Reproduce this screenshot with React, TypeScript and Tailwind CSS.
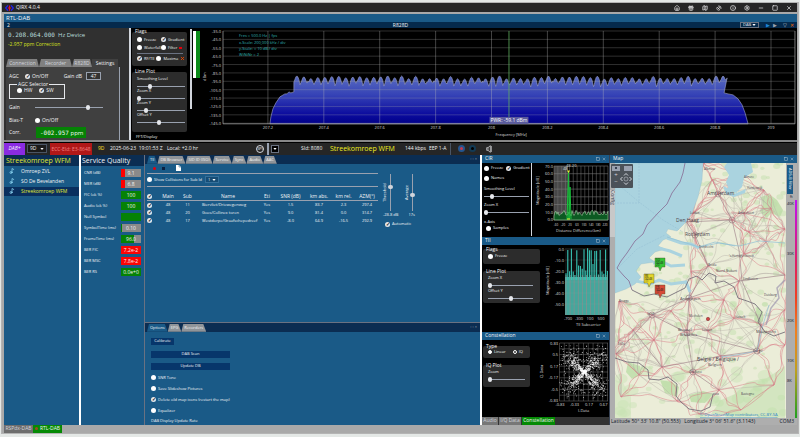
import { useState } from 'react';
import type { ReactNode } from 'react';
import {
  Gift,
  House,
  Info,
  Map,
  Minus,
  Music2,
  SatelliteDish,
  Settings,
  Square,
  X,
} from 'lucide-react';

// small seeded generator, keeps the plots stable between renders
function createRandom(seed: number) {
  let s = seed;
  return () => {
    s = (s * 16807) % 2147483647;
    return s / 2147483647;
  };
}

const checkClass =
  "block h-[5px] w-[5px] shrink-0 appearance-none rounded-full bg-white checked:bg-gray-200 checked:before:block checked:before:text-center checked:before:text-[5px] checked:before:leading-[5px] checked:before:font-bold checked:before:text-black checked:before:content-['✓']";

const sliderClass =
  'block h-[5px] w-full appearance-none bg-transparent [&::-webkit-slider-runnable-track]:h-px [&::-webkit-slider-runnable-track]:bg-gray-400 [&::-webkit-slider-thumb]:-mt-[2px] [&::-webkit-slider-thumb]:h-[5px] [&::-webkit-slider-thumb]:w-[4px] [&::-webkit-slider-thumb]:appearance-none [&::-webkit-slider-thumb]:rounded-full [&::-webkit-slider-thumb]:bg-gray-200';

const verticalClass =
  'block h-[37px] w-[5px] appearance-none bg-transparent [writing-mode:vertical-lr] [&::-webkit-slider-runnable-track]:w-px [&::-webkit-slider-runnable-track]:bg-gray-400 [&::-webkit-slider-thumb]:-ml-[2px] [&::-webkit-slider-thumb]:h-[4px] [&::-webkit-slider-thumb]:w-[5px] [&::-webkit-slider-thumb]:appearance-none [&::-webkit-slider-thumb]:rounded-full [&::-webkit-slider-thumb]:bg-gray-300';

function Check({ label, on = false }: { label: string; on?: boolean }) {
  const [checked, setChecked] = useState(on);
  return (
    <label className="flex items-center gap-[2px] whitespace-nowrap">
      <input type="checkbox" className={checkClass} checked={checked} onChange={(e) => setChecked(e.target.checked)} />
      {label}
    </label>
  );
}

function Slider({ label, value }: { label: string; value: number }) {
  return (
    <label className="block">
      <span className="block h-[7px] whitespace-nowrap">{label}</span>
      <input type="range" defaultValue={value} className={sliderClass} />
    </label>
  );
}

function Select({ label, value, className }: { label: string; value: string; className: string }) {
  return (
    <span className={`flex items-center border px-[2px] ${className}`}>
      <select aria-label={label} className="min-w-0 flex-1 appearance-none bg-transparent leading-none">
        <option>{value}</option>
      </select>
      <svg viewBox="0 0 8 5" className="h-[2px] w-[4px] shrink-0">
        <path d="M0 0h8L4 5z" fill="#fff" />
      </svg>
    </span>
  );
}

function Group({ title, children }: { title: string; children: ReactNode }) {
  return (
    <fieldset className="min-w-0 rounded-[2px] bg-[#2c2c2c] pb-[4px] pl-[5px] pr-[2px]">
      <legend className="-ml-[2px] h-[5px] text-[5px] leading-[5px]">{title}</legend>
      {children}
    </fieldset>
  );
}

function PanelHeader({ title }: { title: string }) {
  return (
    <div className="flex h-[8px] items-center bg-[#1a5a87] px-[3px] text-[5px]">
      <h2>{title}</h2>
      <button aria-label={`Float ${title}`} className="ml-auto">
        <Square className="h-[4px] w-[4px]" />
      </button>
      <button aria-label={`Close ${title}`} className="ml-[2px]">
        <X className="h-[4px] w-[4px]" />
      </button>
    </div>
  );
}

function TabStrip({ tabs, active }: { tabs: string[]; active: string }) {
  return (
    <div className="flex h-[9px] items-end bg-[#0b2d52] pl-[2px] text-[4px]">
      {tabs.map((tab) => (
        <button
          key={tab}
          className={
            tab === active
              ? 'h-[8px] whitespace-nowrap bg-[#1a5a87] pl-[3px] pr-[3px] [clip-path:polygon(2px_0,calc(100%-3px)_0,100%_100%,0_100%)]'
              : 'h-[8px] whitespace-nowrap bg-[#8f9499] pl-[3px] pr-[3px] text-gray-100 [clip-path:polygon(2px_0,calc(100%-3px)_0,100%_100%,0_100%)]'
          }
        >
          {tab}
        </button>
      ))}
      <span className="ml-auto self-center pr-[3px] text-gray-400">‹ › ×</span>
    </div>
  );
}

function TitleBar() {
  const icons = [House, Gift, Map, SatelliteDish, Info, Settings, Minus, Square, X];
  const names = ['Home', 'Packages', 'Map', 'Antenna', 'Info', 'Settings', 'Minimize', 'Maximize', 'Close'];
  return (
    <header className="flex h-[9px] items-center bg-[#262626] px-[3px]">
      <svg viewBox="0 0 24 16" className="h-[6px] w-[9px]">
        <path d="M8 1L2 8l6 7M16 1l6 7-6 7" fill="none" stroke="#2222e0" strokeWidth="4" />
        <path d="M12 1v14M8 8h8" stroke="#e01030" strokeWidth="3" />
      </svg>
      <h1 className="ml-[2px] text-[5px]">QIRX 4.0.4</h1>
      <div className="ml-auto flex items-center gap-[8px] pr-[2px]">
        {icons.map((Icon, i) => (
          <button key={names[i]} aria-label={names[i]}>
            <Icon className="h-[6px] w-[6px]" strokeWidth={2.5} />
          </button>
        ))}
      </div>
    </header>
  );
}

function DevicePanel() {
  const tabs = ['Connection', 'Recorder', 'R828D', 'Settings'];
  return (
    <section className="flex w-[125px] shrink-0 flex-col bg-[#303030]">
      <p className="mt-[3px] flex items-center pl-[4px] text-[6px] leading-[8px] text-[#b9dcdc]">
        <span className="font-['DejaVu_Sans_Mono',monospace]">0.208.064.000</span>
        <span className="ml-[3px]">Hz Device</span>
      </p>
      <p className="mt-[1px] pl-[4px] text-[5px] leading-[8px] text-[#d8e020]">-2.957 ppm Correction</p>
      <div className="mt-[11px] flex h-[8px] pl-[2px] text-[5px]">
        {tabs.map((tab) => (
          <button
            key={tab}
            className={
              tab === 'Settings'
                ? 'w-[26px] bg-[#404040]'
                : tab === 'R828D'
                  ? 'w-[20px] bg-[#808080] text-gray-300 [clip-path:polygon(2px_0,calc(100%-2px)_0,100%_100%,0_100%)]'
                  : 'w-[33px] bg-[#808080] text-gray-300 [clip-path:polygon(2px_0,calc(100%-2px)_0,100%_100%,0_100%)]'
            }
          >
            {tab}
          </button>
        ))}
      </div>
      <div className="mx-[2px] mr-[9px] flex flex-1 flex-col border-r border-gray-400 bg-[#404040] pl-[3px] text-[5px]">
        <div className="mt-[5px] flex h-[8px] items-center">
          <span className="w-[16px]">AGC</span>
          <Check label="On/Off" on />
          <label className="ml-auto mr-[18px] flex items-center gap-[4px]">
            Gain dB
            <input defaultValue="47" className="h-[8px] w-[15px] border border-gray-400 bg-[#333] text-center" />
          </label>
        </div>
        <fieldset className="ml-0 mt-[1px] flex h-[18px] w-[56px] min-w-0 gap-[7px] border border-gray-200 pl-[7px]">
          <legend className="px-[1px] text-[5px] leading-[7px]">AGC Selector</legend>
          <Check label="HW" />
          <Check label="SW" on />
        </fieldset>
        <label className="mt-[5px] flex h-[7px] items-center">
          <span className="w-[26px]">Gain</span>
          <span className="w-[68px]">
            <input type="range" defaultValue={80} className={sliderClass} />
          </span>
        </label>
        <div className="mt-[5px] flex h-[8px] items-center">
          <span className="w-[26px]">Bias-T</span>
          <Check label="On/Off" />
        </div>
        <div className="mt-[3px] flex items-center">
          <span className="w-[27px]">Corr.</span>
          <output className="h-[11px] w-[50px] bg-[#058205] pl-[4px] text-[6px] leading-[11px]">
            <span className="font-['DejaVu_Sans_Mono',monospace]">-002.957</span> ppm
          </output>
        </div>
      </div>
    </section>
  );
}

function FlagsPanel() {
  return (
    <section className="flex w-[70px] shrink-0 bg-black text-[4px]">
      <div className="ml-[1px] flex w-[55px] flex-col gap-[3px] pt-px">
        <Group title="Flags">
          <div className="grid h-[28px] grid-cols-[24px_22px] content-start gap-y-[3px] pt-[3px]">
            <Check label="Freeze" />
            <Check label="Gradient" on />
            <Check label="Waterfall" />
            <span className="flex items-center gap-[2px]">
              <Check label="Filter" />
              <span className="h-[2px] w-[3px] bg-red-600" />
            </span>
            <div className="col-span-2 flex items-center gap-[2px] border-t border-gray-500 pt-[2px]">
              <Check label="RF/TII" on />
              <Check label="Maxima" />
              <X className="ml-auto h-[5px] w-[5px] shrink-0 text-orange-600" strokeWidth={4} />
            </div>
          </div>
        </Group>
        <Group title="Line Plot">
          <div className="flex h-[54px] flex-col pt-[3px]">
            <Slider label="Smoothing Level" value={26} />
            <Slider label="Zoom X" value={0} />
            <Slider label="Zoom Y" value={17} />
            <Slider label="Offset Y" value={45} />
          </div>
        </Group>
        <h3 className="pl-[4px] text-[4px] leading-none">FFT/Display</h3>
      </div>
      <div className="ml-[3px] mt-[1px] h-[80px] w-[2px] bg-gray-300" />
      <div className="ml-[1px] mt-[3px] flex h-[47px] w-[7px] bg-[#0a8a1a]">
        <div className="w-[3px] bg-white" />
      </div>
    </section>
  );
}

function spectrumPath() {
  const rnd = createRandom(11);
  let d = 'M269 124L270 117L272 109L275 103L279 97L284 94L286 94L288 92L290 93L293 92V82';
  for (let x = 293; x < 723; x += 7) {
    const top = 76 + rnd() * 3;
    const dip = 83 + rnd() * 4;
    const end = x + 7 > 722 ? 80 : dip;
    d += `L${x + 1} ${top + 3.5}L${x + 2} ${top + 1}L${x + 3} ${top}L${x + 4} ${top + 1}L${x + 5} ${top + 3.5}L${x + 6.2} ${end}L${x + 7} ${end - 2}`;
  }
  return `${d}L724 93L728 94L733 95L738 99L742 105L745 113L748 124Z`;
}

function Spectrum() {
  const rows = Array.from({ length: 12 }, (_, i) => i);
  const cols = ['207.2', '207.4', '207.6', '207.8', '208', '208.2', '208.4', '208.6', '208.8', '209'];
  return (
    <section className="min-w-0 flex-1 bg-black">
      <svg viewBox="200 28 597 112" className="block w-full" fontSize="4" fill="#ddd" role="img" aria-label="Spectrum">
        <defs>
          <linearGradient id="spec" gradientUnits="userSpaceOnUse" x1="0" y1="76" x2="0" y2="124">
            <stop offset="0" stopColor="#5a6dc0" />
            <stop offset="0.4" stopColor="#3542b6" />
            <stop offset="0.8" stopColor="#0c0c9e" />
            <stop offset="1" stopColor="#000088" />
          </linearGradient>
        </defs>
        <path d={spectrumPath()} fill="url(#spec)" stroke="#a0a5cc" strokeWidth="0.6" />
        {rows.map((i) => (
          <g key={i}>
            <path d={`M222 ${31 + i * 8.4}H795`} stroke="#aaa" strokeOpacity="0.4" strokeWidth="0.7" />
            <text x="220" y={33 + i * 8.4} textAnchor="end">{`-${35 + i * 10}.0`}</text>
          </g>
        ))}
        {cols.map((c, i) => (
          <g key={c}>
            <path d={`M${267 + i * 56} 31V124`} stroke="#bbb" strokeOpacity="0.5" strokeWidth="0.7" />
            <text x={267 + i * 56} y="129.500" textAnchor="middle">{c}</text>
          </g>
        ))}
        <path d="M222 31V124H795V31" fill="none" stroke="#aaa" strokeWidth="0.7" />
        <path d="M508.500 31V118" stroke="#5fae5f" strokeWidth="0.8" />
        <rect x="489" y="117" width="39" height="7" fill="#5a5a9c" />
        <text x="490" y="122.500" fontSize="5" fill="#fff">PWR: -59.1 dBm</text>
        <text x="495" y="136" fontSize="4">Frequency [MHz]</text>
        <text x="205" y="81" fontSize="4" transform="rotate(-90 205 81)">dBm</text>
        <g fill="#2fb5b5">
          <text x="238" y="37">Fres = 500.0 Hz | fps</text>
          <text x="238" y="44">x-Scale: 200,000 kHz / div</text>
          <text x="238" y="50">y-Scale: = 10 dB / div</text>
          <text x="238" y="56">WiNiNr = 2</text>
        </g>
      </svg>
    </section>
  );
}

function StatusBar() {
  return (
    <div className="flex h-[13px] items-center border-t border-black bg-[#262626] text-[5px]">
      <button className="h-[12px] w-[21px] bg-[#8a2be2] text-[5px] italic">DAB+</button>
      <Select label="Channel" value="9D" className="ml-[2px] h-[9px] w-[20px] border-gray-600 bg-[#1b1b1b]" />
      <span className="ml-[3px] h-[12px] w-[42px] bg-[#b01818] text-center leading-[12px] text-[#f08080]">ECC-EId: E3-8648</span>
      <span className="ml-[6px] w-[12px] text-yellow-300">9D</span>
      <span className="w-[57px] whitespace-nowrap">2025-06-23&nbsp; 19:01:53 Z</span>
      <span className="w-[89px]">Local: +2.0 hr</span>
      <span className="flex h-[8px] w-[8px] items-center justify-center rounded-full border border-gray-300 text-[4px]">SPI</span>
      <span className="ml-[3px] h-[12px] w-[2px] bg-gray-400" />
      <button aria-label="Services" className="ml-[2px] flex h-[8px] w-[8px] items-center justify-center border border-gray-500 bg-black">
        <svg viewBox="0 0 8 5" className="h-[2px] w-[4px]">
          <path d="M0 0h8L4 5z" fill="#fff" />
        </svg>
      </button>
      <span className="ml-[22px] w-[29px]">SId: 8080</span>
      <strong className="w-[75px] whitespace-nowrap text-[7px] font-medium text-[#f0f020]">Streekomroep WFM</strong>
      <span className="w-[24px] whitespace-nowrap">144 kbps</span>
      <span className="w-[21px] whitespace-nowrap">EEP 1-A</span>
      <span className="h-[12px] w-px bg-gray-600" />
      <button aria-label="Record" className="ml-[7px] h-[7px] w-[7px] rounded-full border-2 border-[#24558f] bg-[#c43a50]" />
      <button aria-label="Stop" className="ml-[4px] h-[7px] w-[7px] rounded-full border-2 border-[#123a55] bg-black" />
      <button aria-label="Mute" className="ml-[10px]">
        <svg viewBox="0 0 18 24" className="h-[8px] w-[6px] fill-none stroke-gray-200" strokeWidth="2">
          <path d="M2 8h4v8H2zM6 8l7-6v20l-7-6M16 3v18" />
        </svg>
      </button>
    </div>
  );
}

function ServiceList() {
  const services = ['Omroep ZVL', 'SO De Bevelanden', 'Streekomroep WFM'];
  return (
    <nav className="w-[75px] shrink-0">
      <h2 className="h-[11px] bg-[#0b2d52] pl-[2px] text-[7px] leading-[11px] whitespace-nowrap text-[#e0ea30]">Streekomroep WFM</h2>
      <ul className="pt-[1px] text-[5px]">
        {services.map((name) => (
          <li key={name} className="pb-px">
            <button
              className={
                name === 'Streekomroep WFM'
                  ? 'flex h-[9px] w-full items-center gap-[6px] bg-[#0a2f5e] pl-[5px] whitespace-nowrap text-[#e0ea30]'
                  : 'flex h-[9px] w-full items-center gap-[6px] pl-[5px] whitespace-nowrap'
              }
            >
              <Music2 className="h-[8px] w-[6px] text-[#8fd8f5]" strokeWidth={3} />
              {name}
            </button>
          </li>
        ))}
      </ul>
    </nav>
  );
}

const quality = [
  ['CNR (dB)', '9.1', 'bg-[linear-gradient(90deg,#f00_22%,#8a8a8a_22%)]'],
  ['MER (dB)', '6.8', 'bg-[linear-gradient(90deg,#f00_22%,#8a8a8a_22%)]'],
  ['FIC (ok %)', '100', 'bg-[#058205]'],
  ['Audio (ok %)', '100', 'bg-[#058205]'],
  ['Null Symbol', '', 'bg-[#058205]'],
  ['SymbolTime (ms)', '0.10', 'bg-[linear-gradient(90deg,#058205_6%,#8a8a8a_6%)]'],
  ['FrameTime (ms)', '96.0', 'bg-[linear-gradient(90deg,#058205_65%,#8a8a8a_65%)]'],
  ['BER FIC', '7.2e-2', 'bg-[#fa0505]'],
  ['BER MSC', '7.8e-2', 'bg-[#fa0505]'],
  ['BER RS', '0.0e+0', 'bg-[#058205]'],
];

function ServiceQuality() {
  return (
    <section className="w-[65px] shrink-0 border-l-2 border-white">
      <h2 className="h-[11px] bg-[#0b2d52] pl-[1px] text-[7px] leading-[11px] whitespace-nowrap">Service Quality</h2>
      <dl className="grid grid-cols-[37px_20px] gap-y-[3px] pl-[3px] pt-[3px]">
        {quality.map(([name, value, color]) => (
          <div key={name} className="contents">
            <dt className="text-[4px] leading-[8px] whitespace-nowrap">{name}</dt>
            <dd className={`h-[8px] text-center text-[5px] leading-[8px] ${color}`}>{value}</dd>
          </div>
        ))}
      </dl>
    </section>
  );
}

const transmitters = [
  ['48', '11', 'Biervliet/Driewegenweg', 'Yes', '1.5', '83.7', '2.3', '297.4'],
  ['48', '20', 'Goes/Collinex toren', 'Yes', '9.0', '81.4', '0.0', '314.7'],
  ['48', '17', 'Westdorpe/Graafschepedreef', 'Yes', '-8.0', '64.9', '-16.5', '292.9'],
];

function TiiPanel() {
  return (
    <section className="flex min-h-[167px] flex-1 flex-col">
      <TabStrip tabs={['TII', 'DB Browser', 'SID ID (ISO)', 'Service', 'Sync', 'Audio', 'AAC']} active="TII" />
      <div className="flex text-[4px]">
        <div className="ml-[2px] w-[231px] shrink-0">
          <div className="flex h-[10px] items-center border-b border-gray-400 pl-[6px]">
            <button aria-label="Record" className="h-[3px] w-[3px] rounded-full bg-red-600" />
            <button aria-label="Stop" className="ml-[6px] h-[3px] w-[3px] bg-[#0a2040]" />
            <button aria-label="Open log" className="ml-[11px]">
              <svg viewBox="0 0 10 12" className="h-[6px] w-[5px]">
                <path d="M0 0h6l4 4v8H0z" fill="#fff" />
                <path d="M6 0v4h4" fill="none" stroke="#1a5a87" />
              </svg>
            </button>
          </div>
          <div className="flex h-[13px] items-center gap-[3px] border-b border-gray-400">
            <Check label="Show Collisions for Sub Id" />
            <Select label="Sub Id" value="1" className="h-[7px] w-[14px] border-[#35709b] bg-[#164c74]" />
          </div>
          <table className="mt-[5px] w-full table-fixed text-center whitespace-nowrap">
            <thead className="text-[5px]">
              <tr className="h-[9px] border-b border-gray-400">
                <th className="w-[10px]">
                  <input type="checkbox" aria-label="Select all" defaultChecked className={checkClass} />
                </th>
                <th className="w-[22px] font-medium">Main</th>
                <th className="w-[17px] font-medium">Sub</th>
                <th className="w-[64px] font-medium">Name</th>
                <th className="w-[14px] font-medium">Eti</th>
                <th className="w-[33px] font-medium">SNR (dB)</th>
                <th className="w-[24px] font-medium">km abs.</th>
                <th className="w-[25px] font-medium">km rel.</th>
                <th className="font-medium">AZM(°)</th>
              </tr>
            </thead>
            <tbody>
              {transmitters.map((row) => (
                <tr key={row[2]} className="h-[8px]">
                  <td>
                    <input type="checkbox" aria-label={row[2]} defaultChecked className={checkClass} />
                  </td>
                  {row.map((cell, i) => (
                    <td key={i} className={i === 2 ? 'pl-[6px] text-left' : ''}>{cell}</td>
                  ))}
                </tr>
              ))}
            </tbody>
          </table>
        </div>
        <div className="ml-[5px] mt-[10px] w-[32px]">
          <div className="flex justify-between">
            <label className="flex items-center gap-px">
              <span className="rotate-180 [writing-mode:vertical-rl]">Threshold</span>
              <input type="range" defaultValue={34} className={verticalClass} />
            </label>
            <label className="flex items-center gap-px">
              <span className="rotate-180 [writing-mode:vertical-rl]">Average</span>
              <input type="range" defaultValue={57} className={verticalClass} />
            </label>
          </div>
          <div className="mt-[2px] flex justify-between whitespace-nowrap">
            <span>-28.8 dB</span>
            <span>17s</span>
          </div>
          <div className="mt-[5px] pl-[2px]">
            <Check label="Automatic" on />
          </div>
        </div>
      </div>
    </section>
  );
}

function OptionsPanel() {
  return (
    <section className="border-t border-gray-500">
      <TabStrip tabs={['Options', 'EPG', 'Recorders']} active="Options" />
      <div className="flex min-h-[93px] flex-col items-start pl-[6px] pt-[6px] text-[4px]">
        <button className="h-[7px] w-[23px] bg-[#07366b]">Calibrate</button>
        <button className="mt-[6px] h-[7px] w-[79px] bg-[#07366b]">DAB Scan</button>
        <button className="mt-[5px] h-[7px] w-[79px] bg-[#07366b]">Update DB</button>
        <div className="mt-[4px] flex flex-col gap-[3px] leading-[8px]">
          <Check label="SNR Tone" />
          <Check label="Save Slideshow Pictures" />
          <Check label="Delete old map icons (restart the map)" on />
          <Check label="Equalizer" />
          <span className="leading-[6px]">DAB Display Update Rate</span>
        </div>
      </div>
    </section>
  );
}

function CirPlot() {
  const rnd = createRandom(5);
  let noise = 'M554 220';
  for (let x = 554; x <= 608; x += 1) noise += `L${x} ${216 - rnd() * 6}`;
  return (
    <svg viewBox="534 163 75 73" className="h-[73px] w-[75px] shrink-0" fontSize="4" fill="#ddd">
      <rect x="554" y="166" width="14" height="54" fill="#777" fillOpacity="0.6" />
      {Array.from({ length: 8 }, (_, i) => (
        <g key={i}>
          <path d={`M554 ${166 + i * 7.7}H608`} stroke="#888" strokeWidth="0.5" />
          <text x="553" y={167.5 + i * 7.7} textAnchor="end">{`${70 - i * 10}.0`}</text>
        </g>
      ))}
      {Array.from({ length: 15 }, (_, i) => (
        <path key={i} d={`M${554 + i * 3.85} 166V220`} stroke="#777" strokeWidth="0.5" />
      ))}
      <path d={`${noise}V220Z`} fill="#0c5a22" stroke="#a8d0a8" strokeWidth="0.6" />
      <path d="M567 220L568.500 172L569 219L570 187L571 219" fill="none" stroke="#19c23c" strokeWidth="1" />
      <path d="M567 170.500h3l-1.500 2.500z" fill="#ee3" />
      <path d="M567 219h3" stroke="#ee3" />
      <text x="563" y="170">48</text>
      <text x="566" y="166.500">48-20</text>
      {['-60', '-20', '20', '60', '100', '140', '180', '220'].map((t, i) => (
        <text key={t} x={556 + i * 7} y="225.500" fontSize="3" textAnchor="middle">{t}</text>
      ))}
      <text x="556" y="231.500">Distance Difference(km)</text>
      <text x="538.500" y="205" transform="rotate(-90 538.500 205)">Magnitude [dB]</text>
    </svg>
  );
}

function TiiPlot() {
  const rnd = createRandom(21);
  return (
    <svg viewBox="542 245 67 86" className="h-[86px] w-[67px] shrink-0" fontSize="4" fill="#ddd">
      <rect x="565" y="248" width="43" height="67" fill="#0c1010" />
      <rect x="565" y="277" width="43" height="38" fill="#45a79c" />
      {Array.from({ length: 24 }, (_, i) => (
        <path key={i} d={`M${566 + i * 1.8} ${248 + (rnd() > 0.45 ? rnd() * 3 : 16 + rnd() * 12)}V280`} stroke="#38c4b4" strokeWidth="1.1" />
      ))}
      {Array.from({ length: 11 }, (_, i) => (
        <path key={i} d={`M${566 + i * 4.1} 275V315`} stroke="#8c8c8c" strokeWidth="0.7" />
      ))}
      {['0.0', '-10.0', '-20.0', '-30.0', '-40.0', '-50.0'].map((t, i) => (
        <g key={t}>
          <path d={`M565 ${249 + i * 11}H608`} stroke="#aaa" strokeOpacity="0.3" strokeWidth="0.5" />
          <text x="564" y={250.5 + i * 11} textAnchor="end">{t}</text>
        </g>
      ))}
      {['-700', '-300', '100', '500'].map((t, i) => (
        <text key={t} x={568 + i * 11} y="320" textAnchor="middle">{t}</text>
      ))}
      <text x="576" y="326">TII Subcarrier</text>
      <text x="549" y="295" transform="rotate(-90 549 295)">Magnitude [dB]</text>
    </svg>
  );
}

function ConstellationPlot() {
  const rnd = createRandom(77);
  const points = Array.from({ length: 1000 }, (_, i) => {
    const r = Math.pow(rnd(), 1.1) * (i % 2 ? 18 : 27);
    const a = Math.PI / 4 + (Math.floor(rnd() * 4) * Math.PI) / 2 + (rnd() + rnd() - 1) * 0.55;
    return [583 + r * Math.cos(a) + rnd() * 2, 371 - r * Math.sin(a) + rnd() * 2];
  });
  const scatter = Array.from({ length: 180 }, () => [560 + rnd() * 47, 345 + rnd() * 53]);
  return (
    <svg viewBox="538 340 71 77" className="h-[77px] w-[71px] shrink-0" fontSize="4" fill="#ddd">
      {Array.from({ length: 11 }, (_, i) => (
        <path key={i} d={`M559.500 ${343 + i * 5.8}H608M${559.5 + i * 4.8} 343V401`} stroke="#707070" strokeWidth="0.5" />
      ))}
      {[...points, ...scatter].map(([x, y], i) => (
        <rect key={i} x={x} y={y} width="0.7" height="0.7" fill="#fff" />
      ))}
      {['0.83', '0.5', '0.17', '-0.17', '-0.5', '-0.83'].map((t, i) => (
        <text key={t} x="558" y={345 + i * 11.4} textAnchor="end">{t}</text>
      ))}
      {['-0.83', '-0.33', '0.17', '0.67'].map((t, i) => (
        <text key={t} x={560 + i * 14.5} y="405.500" textAnchor="middle">{t}</text>
      ))}
      <text x="578" y="412">I-Data</text>
      <text x="543" y="378" transform="rotate(-90 543 378)">Q-Data</text>
    </svg>
  );
}

function PlotColumn() {
  return (
    <aside className="flex w-[129px] shrink-0 flex-col border-l-2 border-white bg-black text-[4px]">
      <section>
        <PanelHeader title="CIR" />
        <div className="flex h-[73px] justify-between">
          <div className="flex w-[50px] flex-col border-r border-gray-300 px-[2px] pt-[3px]">
            <div className="flex gap-[3px]">
              <Check label="Freeze" />
              <Check label="Gradient" on />
            </div>
            <div className="mb-[6px] mt-[5px]">
              <Check label="Names" />
            </div>
            <Slider label="Smoothing Level" value={15} />
            <div className="mt-[4px]">
              <Slider label="Zoom X" value={0} />
            </div>
            <span className="mt-[5px]">x-Axis</span>
            <div className="mt-[2px] pl-[2px]">
              <Check label="Samples" />
            </div>
          </div>
          <CirPlot />
        </div>
      </section>
      <section className="pt-px">
        <PanelHeader title="TII" />
        <div className="flex h-[86px] justify-between">
          <div className="flex w-[58px] flex-col gap-[5px] pl-[1px] pt-[2px]">
            <Group title="Flags">
              <div className="h-[8px] pt-[2px]">
                <Check label="Freeze" />
              </div>
            </Group>
            <Group title="Line Plot">
              <div className="flex h-[25px] w-[45px] flex-col gap-[1px] pt-[2px]">
                <Slider label="Zoom X" value={0} />
                <Slider label="Offset Y" value={52} />
              </div>
            </Group>
          </div>
          <TiiPlot />
        </div>
      </section>
      <section className="flex-1 pt-px">
        <PanelHeader title="Constellation" />
        <div className="flex h-[77px] justify-between">
          <div className="flex w-[48px] flex-col gap-[5px] pl-[1px] pt-[4px]">
            <Group title="Type">
              <div className="flex h-[5px] gap-[7px] pt-px">
                <label className="flex items-center gap-[2px]">
                  <input type="radio" name="type" defaultChecked className="h-[4px] w-[4px] appearance-none rounded-full border border-white checked:bg-white" />
                  Linear
                </label>
                <label className="flex items-center gap-[2px]">
                  <input type="radio" name="type" className="h-[4px] w-[4px] appearance-none rounded-full border border-white checked:bg-white" />
                  IQ
                </label>
              </div>
            </Group>
            <Group title="IQ Plot">
              <div className="h-[15px] w-[37px] pt-[2px]">
                <Slider label="Zoom" value={0} />
              </div>
            </Group>
          </div>
          <ConstellationPlot />
        </div>
      </section>
      <div className="flex h-[8px] gap-px bg-[#333] text-[5px] whitespace-nowrap">
        <button className="w-[16px] bg-[#777] text-gray-300">Audio</button>
        <button className="w-[22px] bg-[#777] text-gray-300">I/Q Data</button>
        <button className="w-[33px] bg-[#058a05]">Constellation</button>
      </div>
    </aside>
  );
}

const cities: [string, number, number, number][] = [
  ['Amsterdam', 708, 195, 5],
  ['Den Haag', 677, 222, 5],
  ['Rotterdam', 686, 236, 5],
  ['Leiden', 691, 214, 3],
  ['Alkmaar', 705, 170, 3],
  ['Almere', 745, 178, 3],
  ['Harderwijk', 748, 189, 3],
  ['Amersfoort', 739, 214, 3],
  ['Dordrecht', 700, 248, 3],
  ["'s-Hertogenbosch", 730, 257, 3],
  ['Breda', 709, 266, 3],
  ['Noord-Brabant', 717, 272, 3],
  ['Eindhoven', 744, 280, 3],
  ['Antwerpen', 681, 300, 4],
  ['Brugge', 620, 302, 3],
  ['Gent', 648, 315, 3],
  ['Mechelen', 690, 317, 3],
  ['Brussel', 679, 331, 4],
  ['Bruxelles', 681, 336, 4],
  ['Leuven', 703, 331, 3],
  ['Hasselt', 736, 318, 3],
  ['Maastricht', 757, 333, 4],
  ['Liège', 754, 352, 4],
  ['België / Belgique /', 698, 361, 5],
  ['Belgien', 709, 366, 4],
  ['Charleroi', 690, 373, 3],
  ['Lille', 619, 345, 4],
  ['Bastogne', 742, 395, 3],
  ['Duisburg', 765, 296, 3],
];

const nodes = [
  [705, 163], [713, 180], [719, 194], [694, 213], [687, 221], [696, 235], [733, 220], [745, 213], [772, 208],
  [786, 229], [767, 242], [745, 254], [709, 266], [740, 281], [786, 275], [692, 272], [690, 298], [653, 315],
  [620, 301], [620, 340], [617, 354], [688, 333], [709, 331], [735, 318], [762, 325], [758, 351], [722, 356],
  [694, 372], [663, 367], [640, 375], [622, 397], [720, 390], [742, 410], [775, 385], [786, 345], [655, 340],
  [786, 310], [678, 401], [700, 414], [634, 330], [672, 311], [765, 190], [736, 174], [750, 232], [725, 300],
];

function roadPaths() {
  const rnd = createRandom(3);
  const major: string[] = [];
  const minor: string[] = [];
  nodes.forEach(([x, y], i) => {
    const near = nodes
      .map(([a, b], j) => ({ a, b, j, d: Math.hypot(a - x, b - y) }))
      .filter((n) => n.j !== i && n.d < 60)
      .sort((m, n) => m.d - n.d)
      .slice(0, 8);
    near.forEach(({ a, b }, k) => {
      const j = () => (rnd() - 0.5) * 8;
      const at = (t: number) => `${x + (a - x) * t + j()} ${y + (b - y) * t + j()}`;
      const d = `M${x} ${y}C${at(0.15)} ${at(0.25)} ${at(0.4)}S${at(0.7)} ${a} ${b}`;
      if (k < 4) major.push(d);
      else minor.push(d);
    });
  });
  return { major: major.join(''), minor: minor.join('') };
}

function patchList() {
  const rnd = createRandom(91);
  return Array.from({ length: 320 }, () => {
    const y = 163 + rnd() * 255;
    const south = y > 370;
    return { x: 618 + rnd() * 168, y, r: 1 + rnd() * (south ? 5 : 2), o: south ? 0.4 : 0.5 };
  });
}

const SEA =
  'M616 163H704L703 180L699 197L693 213L687 222L678 231L669 229L667 233L672 237L664 240L659 246L666 249L656 252L650 258L656 262L642 264L637 271L642 277L636 284L627 289L616 293Z';

const markers = [
  { x: 656, y: 258, color: '#35c435', lines: ['SO', '9D48', '20'] },
  { x: 645, y: 274, color: '#e4d62c', lines: ['RE', '9D48', '11'] },
  { x: 656, y: 285, color: '#d84a38', lines: ['FR', '9D48', '17'] },
];

function MapDrawing() {
  const { major, minor } = roadPaths();
  return (
    <svg viewBox="616 163 171 255" preserveAspectRatio="xMidYMid slice" className="block h-[255px] min-w-0 flex-1" role="img" aria-label="Map of the Netherlands and Belgium">
      <rect x="616" y="163" width="171" height="255" fill="#ebedd8" />
      {patchList().map((p, i) => (
        <ellipse key={i} cx={p.x} cy={p.y} rx={p.r * 1.3} ry={p.r} fill="#c3e0ae" opacity={p.o} />
      ))}
      <path d="M762 197l8-3 8 6 6 10-3 7-9-4-4 5-7-6 3-7zM758 307l6 5 0 9-6 5-3-7zM629 362l12 4 2 8-10 5-6-7zM661 380l12 2 7 5-2 10-12-4zM690 395l14-4 10 3-8 9-14-1z" fill="#bcdca6" opacity="0.8" />
      <path d="M712 414l10-14 14-6 12-12 20-4 18-12v52z" fill="#bcdda8" opacity="0.5" />
      <path d="M616 380l8 3 8 14 0 21h-16z" fill="#c9e3b6" opacity="0.5" />
      <path d={minor} fill="none" stroke="#b3aca4" strokeWidth="0.5" opacity="0.8" />
      <path d={major} fill="none" stroke="#d87884" strokeWidth="0.7" opacity="0.7" />
      <path d="M719 194L733 220L740 250L743 281L762 325L758 351M687 221L696 235L709 266L690 298L688 333L694 372L720 390M617 354L653 315L690 298L740 281L786 275M733 220L686 222M653 315L688 333L758 351M634 330L663 367L722 356L758 351" fill="none" stroke="#9d8087" strokeWidth="0.8" opacity="0.8" />
      <path d={SEA} fill="#aad3df" stroke="#8db8c4" strokeWidth="0.3" />
      <path d="M728 163h24l2 9-9 6-2 9-6 6-7-3-3-8 3-7-5-8zM724 186l7 3 4 5 12-5-1 4-11 4-8-3z" fill="#aad3df" />
      <path d="M668 238l14 5 10 1 8 4M659 248l12 3 12 5M654 263l10-1 8 4 14-1M637 281l14 3 9-4 12 4 15-2 4 10" fill="none" stroke="#aad3df" strokeWidth="3" />
      <path d="M668 237l16 5 16 5 20-4 20 3 20-5 26 2M700 247l16-5 20 4M691 292l-1 6M770 305l-6 20-6 26-20 4-16 2" fill="none" stroke="#8fc0d4" strokeWidth="0.7" />
      <path d="M616 182l24 20 24 18 20 12M618 269l20-20 28-14M640 163v40h-24" fill="none" stroke="#8db9ce" strokeWidth="0.4" strokeDasharray="2 1" />
      <path d="M686 163L684 173L681 182L673 193L668 204L659 213L648 225L644 234L636 241L628 253L622 261L618 268L625 276L630 281L633 290" fill="none" stroke="#8b769c" strokeWidth="0.9" />
      <path d="M633 290L645 296L655 294L668 297L678 292L686 288L690 279L698 276L703 280L710 273L717 276L716 283L725 281L735 287L739 298L748 301L756 304L763 312L759 322L766 332L775 336L786 332M616 358L628 362L640 363L649 370L650 379L660 380L669 377L678 384L677 396L682 402L690 409L702 411L711 407L714 394L720 394" fill="none" stroke="#77707a" strokeWidth="0.9" />
      <path d="M767 325L772 308L780 298L778 288L786 280" fill="none" stroke="#9187a8" strokeWidth="1.500" opacity="0.6" />
      {[[719, 194], [696, 235], [690, 298], [688, 333], [653, 315], [758, 351], [694, 372], [733, 220]].map(([x, y]) => (
        <circle key={`${x}-${y}`} cx={x} cy={y} r="3" fill="none" stroke="#a38b8d" strokeWidth="0.8" />
      ))}
      <g fill="#4a444c" fontFamily="Open Sans">
        {cities.map(([name, x, y, size]) => (
          <text key={name} x={x} y={y} fontSize={size}>{name}</text>
        ))}
      </g>
      <circle cx="709" cy="319" r="1.700" fill="#d04444" stroke="#7b3030" strokeWidth="0.5" />
      {markers.map((m) => (
        <g key={m.color}>
          <path d={`M${m.x} ${m.y}h10v9h-3l-2 4-1.500-4h-3.500z`} fill={m.color} stroke="#4b4b2a" strokeWidth="0.4" />
          {m.lines.map((line, i) => (
            <text key={i} x={m.x + 1} y={m.y + 3 + i * 2.6} fontSize="3" fill="#222">{line}</text>
          ))}
        </g>
      ))}
      <text x="701" y="416" fontSize="4" fill="#2382c8" textDecoration="underline">© OpenStreetMap contributors, CC-BY-SA</text>
    </svg>
  );
}

function MapPanel() {
  return (
    <section className="flex w-[188px] shrink-0 flex-col border-l border-gray-700 bg-[#aeaeae] text-[5px]">
      <PanelHeader title="Map" />
      <div className="relative flex">
        <div className="w-[5px] shrink-0 pt-[27px]">
          <button className="flex h-[47px] w-[5px] items-start bg-[#c8c8c8] text-[5px] leading-[5px] text-gray-700 [writing-mode:vertical-rl]">
            Config
          </button>
        </div>
        <MapDrawing />
        <div className="absolute left-px top-px grid h-[24px] w-[22px] grid-cols-[8px_12px] items-center rounded-[1px] bg-[#4b5259] p-[1px] text-gray-300">
          <button aria-label="Center" className="flex h-[5px] w-[8px] items-center justify-center bg-gray-400">
            <span className="h-[2px] w-[2px] bg-gray-700" />
          </button>
          <button aria-label="Layers" className="ml-[4px] h-[5px] w-[8px] bg-gray-400" />
          <span className="flex flex-col items-center text-[6px] leading-[7px]">
            <button aria-label="Zoom in">+</button>
            <button aria-label="Zoom out">−</button>
          </span>
          <svg viewBox="0 0 24 24" className="h-[12px] w-[12px] fill-none stroke-gray-300">
            <circle cx="12" cy="12" r="4" />
            <path d="M8 5l4-4 4 4M8 19l4 4 4-4M5 8l-4 4 4 4M19 8l4 4-4 4" strokeWidth="2" />
          </svg>
        </div>
        <div className="flex w-[11px] shrink-0 justify-between pt-[2px] text-[4px] text-gray-900">
          <div className="flex flex-col items-start pl-px">
            <button className="flex h-[29px] w-[6px] items-center justify-center bg-[#1a5a87] leading-[6px] whitespace-nowrap text-white [writing-mode:vertical-rl]">ADS-B Filter</button>
            <span className="pl-[3px] leading-[6px]">ft</span>
            <span className="mt-[1px] w-[8px] leading-[6px]">40K</span>
            <span className="mt-[44px] leading-[6px]">30K</span>
            <span className="mt-[61px] leading-[6px]">20K</span>
            <span className="mt-[34px] leading-[6px]">10K</span>
            <span className="mt-[14px] leading-[6px]">8K</span>
          </div>
          <div className="mt-[35px] h-[218px] w-[2px] shrink-0 bg-[linear-gradient(#c010f0,#e02060_30%,#f04020_45%,#f08020_60%,#c0a020_78%,#20a020)]" />
        </div>
      </div>
      <footer className="flex h-[7px] items-center justify-between px-px text-[5px] text-gray-900">
        <span className="whitespace-nowrap">Latitude 50° 33' 10.8" (50.553) &nbsp; Longitude 3° 06' 51.6" (3.1143)</span>
        <span className="pr-[2px]">COM3</span>
      </footer>
    </section>
  );
}

export default function App() {
  return (
    <div className="min-h-screen bg-[#e4e8e6] pb-[3px] pl-px pr-[1px] pt-[2px] font-['Open_Sans',sans-serif] leading-none font-medium text-gray-100">
      <div className="border border-[#b4b4b4] bg-[#a9a9a9] pr-px">
        <TitleBar />
        <main className="ml-[2px] mt-[2px] bg-[#1a5a87]">
          <h2 className="h-[8px] pl-[2px] text-[6px] leading-[8px]">RTL-DAB</h2>
          <div className="flex h-[6px] items-center bg-[#052a4c] px-[3px] text-[5px]">
            <span className="flex-1">2</span>
            <span>R828D</span>
            <div className="flex flex-1 items-center justify-end gap-[3px]">
              <Select label="Mode" value="DAB" className="mr-[4px] h-[6px] w-[19px] border-gray-500 text-[4px]" />
              <span className="text-[#1d86d8]">▶</span>
              <span className="text-gray-400">▶</span>
              <span className="ml-[3px] text-gray-300">▽</span>
              <span className="text-orange-500">✕</span>
            </div>
          </div>
          <div className="flex border-b-2 border-[#888] bg-black">
            <DevicePanel />
            <div className="w-[2px] shrink-0 bg-gray-300" />
            <FlagsPanel />
            <Spectrum />
          </div>
          <StatusBar />
          <div className="flex">
            <ServiceList />
            <ServiceQuality />
            <div className="flex min-w-0 flex-1 flex-col border-l border-gray-500">
              <TiiPanel />
              <OptionsPanel />
            </div>
            <PlotColumn />
            <MapPanel />
          </div>
        </main>
        <div className="ml-[2px] flex h-[8px] text-[5px] whitespace-nowrap">
          <button className="w-[29px] bg-[#6e6e6e] text-gray-300">RSPdx-DAB</button>
          <button className="flex w-[29px] items-center justify-center gap-[2px] bg-[#058a05]">
            <span className="h-[3px] w-[3px] rounded-full bg-[#a04a20]" />
            RTL-DAB
          </button>
        </div>
      </div>
    </div>
  );
}
